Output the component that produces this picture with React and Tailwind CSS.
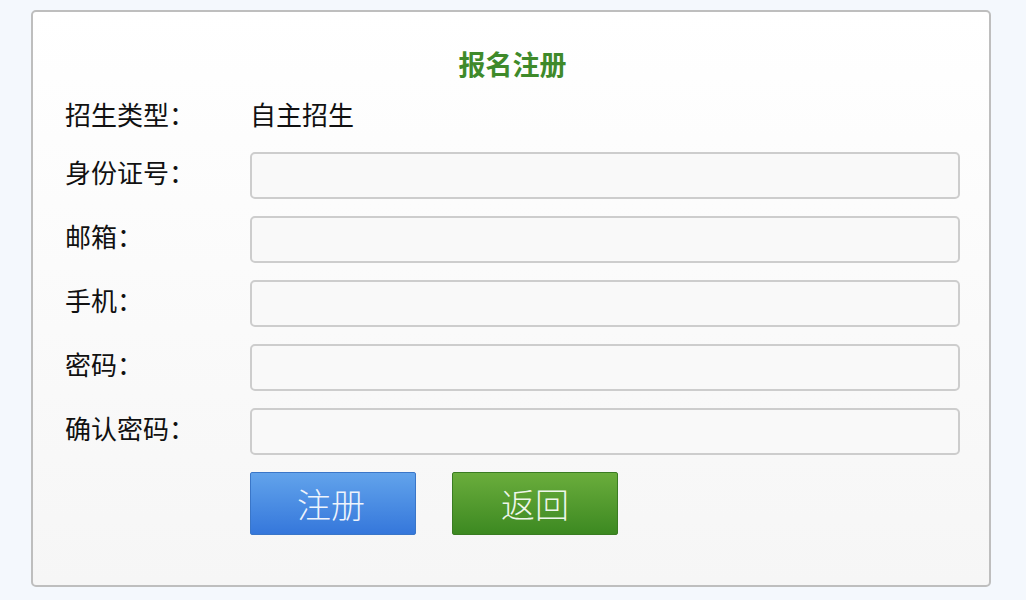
import React from 'react';

const fields = ['身份证号：', '邮箱：', '手机：', '密码：', '确认密码：'];

function App() {
  return (
    <div
      className="min-h-[600px] w-full bg-[#f4f8fd] pt-[10px] pl-[31px]"
      style={{ fontFamily: '"Noto Sans CJK SC", "Liberation Sans", sans-serif' }}
    >
      <div className="w-[960px] h-[577px] rounded-[5px] border-2 border-[#bebebe] bg-gradient-to-b from-white to-[#f6f6f6] pt-[33px] pl-[32px] pr-[29px] flex flex-col">
        {/* title */}
        <div className="h-[36px] flex items-center justify-center text-[27px] font-bold text-[#3f8a2a] leading-none">
          报名注册
        </div>

        {/* enrolment type */}
        <div className="mt-[13px] h-[47px] flex items-center text-[26px] text-[#111] leading-none pb-[7px]">
          <div className="w-[185px]">招生类型：</div>
          <div>自主招生</div>
        </div>

        <div className="mt-[11px] flex flex-col gap-[17px]">
          {fields.map((label, index) => (
            <div key={index} className="flex items-center h-[47px]">
              <label className="w-[185px] text-[26px] text-[#111] leading-none pb-[8px]">{label}</label>
              <input
                type="text"
                className="flex-1 h-[47px] rounded-[5px] border-2 border-[#cdcdcd] bg-[#f9f9f9] outline-none px-3"
              />
            </div>
          ))}
        </div>

        <div className="mt-[17px] pl-[185px] flex gap-[36px]">
          <button className="w-[166px] h-[63px] rounded-[2px] border border-[#3a76c8] bg-gradient-to-b from-[#62a3eb] to-[#3577db] text-[34px] font-light text-[#eef4fc] leading-none pr-[4px]">
            注册
          </button>
          <button className="w-[166px] h-[63px] rounded-[2px] border border-[#3a7c22] bg-gradient-to-b from-[#6aad3c] to-[#3c8921] text-[34px] font-light text-[#eef6ea] leading-none">
            返回
          </button>
        </div>
      </div>
    </div>
  );
}

export default App;
